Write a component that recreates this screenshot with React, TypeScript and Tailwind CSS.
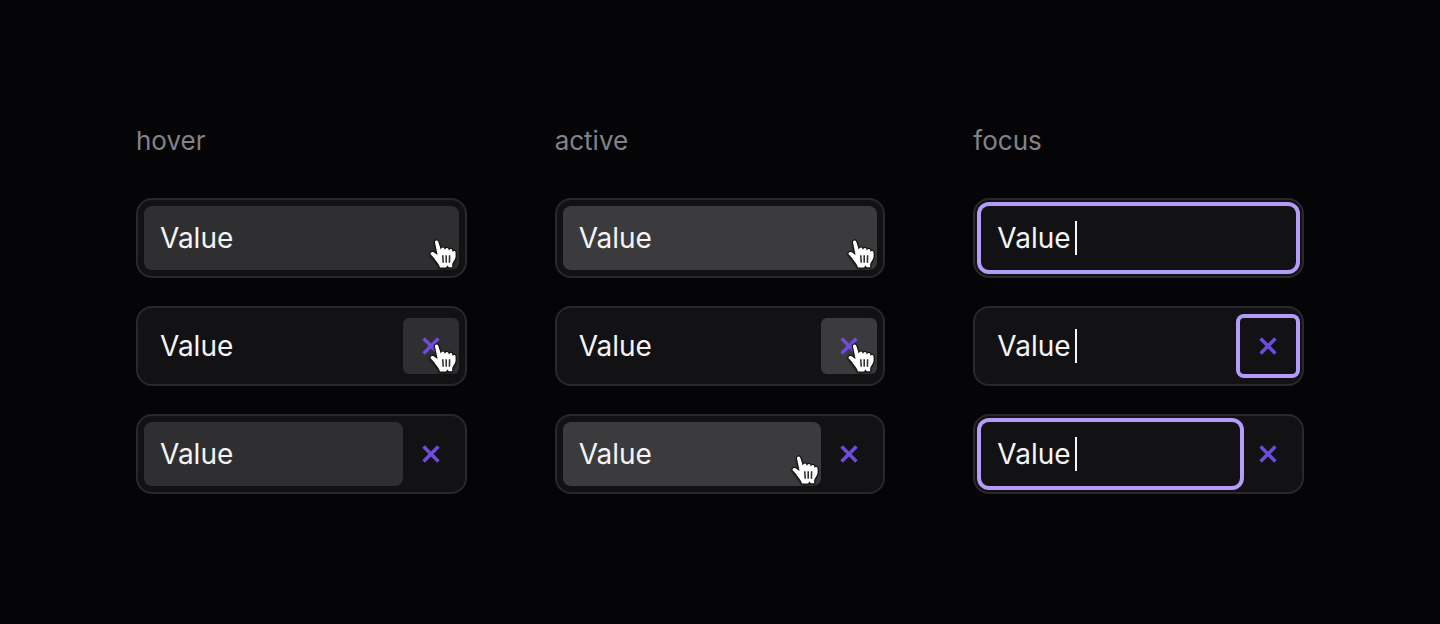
import clsx from 'clsx'

type State = 'hover' | 'active' | 'focus'

interface FieldProps {
  state: State
  // Which part of the field shows the state
  target: 'input' | 'clear'
  clearable?: boolean
  cursor?: boolean
}

const fills: Record<State, string> = {
  hover: 'bg-[#2f2f31]',
  active: 'bg-[#3b3b3d]',
  focus: 'ring-4 ring-[#b49df8]',
}

// Pointing hand, sits in the bottom right corner of its parent
function HandCursor() {
  return (
    <svg
      className="pointer-events-none absolute right-0 bottom-0 h-8 w-[30px] overflow-visible drop-shadow-[0_1px_1px_rgba(0,0,0,0.5)]"
      viewBox="0 0 30 32"
      fill="none"
      aria-hidden="true"
    >
      <path
        d="M6 4.6C5.6 2.2 8.4 1.6 9.2 3.6L11.8 11.8L12.4 10.2C13.2 9 15 9.2 15.4 10.4L15.9 12L16.5 10.8C17.2 9.6 19 9.8 19.4 11L19.9 12.6L20.6 11.6C21.4 10.6 23 11 23.2 12.2L23.6 13.8C24.8 12.4 26.6 13 26.6 14.8V18.8C26.4 21.8 24 23.6 23.2 26V29.2H19.8L18.6 27.4L17 29.4H11C10.2 26.2 7.8 24.4 6.2 21.8C5 19.6 3.4 18.4 1.8 16.6C0.8 15 2.4 13.2 4.6 14.2L8.6 17Z"
        fill="white"
        stroke="#111"
        strokeWidth="2"
        strokeLinejoin="round"
        paintOrder="stroke"
      />
      <path
        d="M13.8 17.2L14.2 24.8M17.2 17.2V24.8M20.6 17.2L20.4 24.8"
        stroke="#333"
        strokeWidth="1.6"
      />
    </svg>
  )
}

function CloseIcon() {
  return (
    <svg className="size-5" viewBox="0 0 20 20" fill="none" aria-hidden="true">
      <path d="M2.6 2.6L17.4 17.4M17.4 2.6L2.6 17.4" stroke="#6e4bdb" strokeWidth="3.6" />
    </svg>
  )
}

function Field({ state, target, clearable, cursor }: FieldProps) {
  const onInput = target === 'input'

  return (
    <div className="flex h-20 items-center rounded-2xl border-2 border-[#29292b] bg-[#121214] p-1.5">
      <label
        className={clsx(
          'relative flex h-full min-w-0 flex-1 items-center rounded-lg px-4',
          onInput && fills[state]
        )}
      >
        <input
          type="text"
          defaultValue="Value"
          aria-label={`${state} value`}
          className="field-sizing-content min-w-0 bg-transparent text-[28px] leading-10 text-[#f4f4f5] outline-none"
        />
        {/* Caret */}
        {state === 'focus' && <span className="ml-1 h-[34px] w-0.5 shrink-0 bg-[#f4f4f5]" />}
        {cursor && onInput && <HandCursor />}
      </label>

      {clearable && (
        <button
          type="button"
          aria-label="Clear"
          className={clsx(
            'relative flex size-14 shrink-0 items-center justify-center outline-none',
            state === 'focus' ? 'rounded-sm' : 'rounded-md',
            !onInput && fills[state]
          )}
        >
          <CloseIcon />
          {cursor && !onInput && <HandCursor />}
        </button>
      )}
    </div>
  )
}

function Column({ state }: { state: State }) {
  const pointer = state !== 'focus'

  return (
    <section>
      <h2 className="mb-9 text-[26px] leading-[42px] text-[#828288]">{state}</h2>
      <div className="flex flex-col gap-7">
        <Field state={state} target="input" cursor={pointer} />
        <Field state={state} target="clear" clearable cursor={pointer} />
        <Field state={state} target="input" clearable cursor={state === 'active'} />
      </div>
    </section>
  )
}

export default function App() {
  return (
    <main className="grid min-h-screen grid-cols-3 gap-[88px] bg-[#050507] px-[136px] pt-[120px] font-['Inter',sans-serif]">
      <Column state="hover" />
      <Column state="active" />
      <Column state="focus" />
    </main>
  )
}
